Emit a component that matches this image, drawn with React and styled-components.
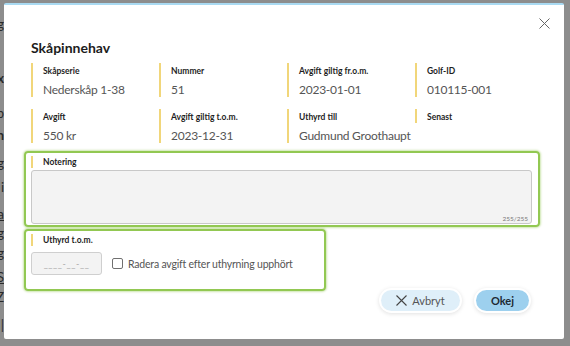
import React from 'react'
import styled, { createGlobalStyle } from 'styled-components'

const Global = createGlobalStyle`
  html, body { margin: 0; padding: 0; }
  body {
    width: 570px;
    height: 346px;
    overflow: hidden;
    background: #8d8d8d;
    font-family: Lato, "Open Sans", sans-serif;
  }
`

const Backdrop = styled.div`
  display: flex;
  width: 570px;
  height: 346px;
  background: #8d8d8d;
`

const Sliver = styled.div`
  width: 4px;
  overflow: hidden;
  display: flex;
  flex-direction: column;
  align-items: flex-end;
  color: #2a2a2a;
  font-size: 13px;
  line-height: 14px;
`

const Peek = styled.span`
  margin-top: ${p => p.$gap}px;
  text-decoration: ${p => (p.$u ? 'underline' : 'none')};
  font-weight: ${p => (p.$b ? 700 : 400)};
`

const Modal = styled.div`
  position: relative;
  margin: 3px 0 0 0;
  width: 560px;
  height: 336px;
  background: #fff;
  border-top: 2px solid #a9daf2;
  border-radius: 2px;
  box-sizing: border-box;
  padding: 34px 24px 0 20px;
  display: flex;
  flex-direction: column;
`

const Close = styled.button`
  position: absolute;
  top: 11px;
  right: 13px;
  width: 14px;
  height: 14px;
  padding: 0;
  border: none;
  background: none;
  display: flex;
  align-items: center;
  justify-content: center;
`

const Title = styled.h2`
  margin: 0 0 6px 7px;
  font-size: 14px;
  line-height: 18px;
  font-weight: 700;
  color: #1c1c1c;
`

const Grid = styled.div`
  display: grid;
  grid-template-columns: repeat(4, 128px);
  row-gap: 12px;
  margin-left: 7px;
  margin-bottom: 8px;
`

const Field = styled.div`
  border-left: 2px solid #f1d67a;
  padding: 2px 0 0 10px;
  align-self: start;
`

const Label = styled.div`
  font-size: 8.5px;
  line-height: 12px;
  font-weight: 700;
  color: #1e1e1e;
  white-space: nowrap;
`

const Value = styled.div`
  margin-top: 5px;
  font-size: 12px;
  line-height: 15px;
  letter-spacing: -0.25px;
  color: #555;
  white-space: nowrap;
`

const Highlight = styled.div`
  border: 2px solid #92c852;
  box-shadow: 0 0 2px 1px rgba(146, 200, 82, 0.45);
  border-radius: 4px;
  padding: 3px 6px 1px 5px;
  width: ${p => p.$w}px;
  box-sizing: border-box;
  margin-bottom: 2px;
`

const SubLabel = styled(Label)`
  border-left: 2px solid #f1d67a;
  padding-left: 10px;
  margin-bottom: ${p => p.$mb}px;
`

const TextArea = styled.div`
  position: relative;
  height: 54px;
  background: #f3f3f3;
  border: 1px solid #c8c8c8;
  border-radius: 3px;
  box-sizing: border-box;
`

const Counter = styled.span`
  position: absolute;
  right: 3px;
  bottom: 1px;
  font-size: 6.5px;
  color: #777;
`

const Row = styled.div`
  display: flex;
  align-items: center;
  gap: 10px;
  padding-bottom: 13px;
  padding-top: 2px;
`

const DateInput = styled.div`
  width: 71px;
  height: 23px;
  background: #f3f3f3;
  border: 1px solid #cfcfcf;
  border-radius: 3px;
  box-sizing: border-box;
  color: #aaa;
  font-size: 9px;
  line-height: 22px;
  text-align: center;
  letter-spacing: 0.6px;
`

const Check = styled.label`
  display: flex;
  align-items: center;
  gap: 5px;
  font-size: 10.5px;
  letter-spacing: -0.2px;
  color: #555;
  white-space: nowrap;
`

const Box = styled.span`
  width: 9px;
  height: 9px;
  border: 1px solid #707070;
  border-radius: 2px;
  background: #fff;
`

const Footer = styled.div`
  display: flex;
  justify-content: flex-end;
  gap: 16px;
  margin-top: -3px;
  padding-right: 11px;
`

const Button = styled.button`
  display: flex;
  align-items: center;
  justify-content: center;
  gap: 5px;
  height: 21px;
  width: ${p => p.$w}px;
  border: none;
  border-radius: 11px;
  background: ${p => (p.$primary ? '#9dd0ee' : '#dfeff9')};
  color: ${p => (p.$primary ? '#1d2a33' : '#555')};
  font-family: Lato, sans-serif;
  font-size: 11px;
  font-weight: ${p => (p.$primary ? 700 : 400)};
  box-shadow: 0 0 0 2px #fff, 0 1px 4px 2px rgba(0, 0, 0, 0.12);
  padding: 0;
`

const fields = [
  ['Skåpserie', 'Nederskåp 1-38'],
  ['Nummer', '51'],
  ['Avgift giltig fr.o.m.', '2023-01-01'],
  ['Golf-ID', '010115-001'],
  ['Avgift', '550 kr'],
  ['Avgift giltig t.o.m.', '2023-12-31'],
  ['Uthyrd till', 'Gudmund Groothaupt'],
  ['Senast', null],
]

const peeks = [
  ['g', 17], ['x', 40, false, true], ['p', 21], ['n', 8, false, true], ['g', 14],
  ['i', 10], ['a', 13, true], ['g', 5], ['g', 6], ['S', 10, true], ['Z', 6], ['|', 14],
]

export default function App() {
  return (
    <>
      <Global />
      <Backdrop>
        <Sliver>
          {peeks.map(([c, g, u, b], i) => (
            <Peek key={i} $gap={g} $u={u} $b={b}>{c}</Peek>
          ))}
        </Sliver>
        <Modal>
          <Close aria-label="Stäng">
            <svg width="11" height="11" viewBox="0 0 11 11">
              <path d="M0.5 0.5 L10.5 10.5 M10.5 0.5 L0.5 10.5" stroke="#666" strokeWidth="1" />
            </svg>
          </Close>
          <Title>Skåpinnehav</Title>
          <Grid>
            {fields.map(([l, v]) => (
              <Field key={l}>
                <Label>{l}</Label>
                {v && <Value>{v}</Value>}
              </Field>
            ))}
          </Grid>
          <Highlight $w={516}>
            <SubLabel $mb={2}>Notering</SubLabel>
            <TextArea>
              <Counter>255/255</Counter>
            </TextArea>
          </Highlight>
          <Highlight $w={302}>
            <SubLabel $mb={4}>Uthyrd t.o.m.</SubLabel>
            <Row>
              <DateInput>____-__-__</DateInput>
              <Check>
                <Box />
                Radera avgift efter uthyrning upphört
              </Check>
            </Row>
          </Highlight>
          <Footer>
            <Button $w={79}>
              <svg width="11" height="11" viewBox="0 0 11 11">
                <path d="M0.5 0.5 L10.5 10.5 M10.5 0.5 L0.5 10.5" stroke="#444" strokeWidth="1.1" />
              </svg>
              Avbryt
            </Button>
            <Button $w={53} $primary>Okej</Button>
          </Footer>
        </Modal>
      </Backdrop>
    </>
  )
}
